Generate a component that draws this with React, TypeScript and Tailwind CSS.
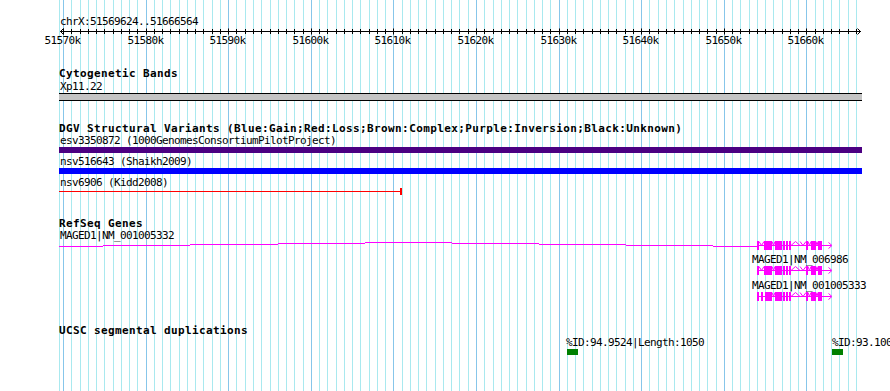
import React from "react";

// GBrowse-style track view of chrX:51569624..51666564
const X0 = 63.5; // x of 51570k
const KB = 8.26; // px per kb
const gx = (i: number) => Math.floor(X0 + i * KB);

const MINOR = "#a9e9ef";
const MAJOR = "#87c6ea";
const MAGENTA = "#ff00ff";

const GridLines = () => {
  const lines = [];
  lines.push(<rect key="start" x={59} y={0} width={1} height={391} fill={MINOR} />);
  for (let i = 0; i <= 96; i++) {
    lines.push(
      <rect key={i} x={gx(i)} y={0} width={1} height={391} fill={i % 10 === 0 ? MAJOR : MINOR} />
    );
  }
  return (
    <svg className="absolute inset-0" width={890} height={391}>
      {lines}
    </svg>
  );
};

const Ruler = () => {
  const ticks = [];
  for (let i = 0; i <= 96; i++) {
    const x = gx(i) + 0.5;
    const major = i % 10 === 0;
    ticks.push(
      <line key={i} x1={x} x2={x} y1={major ? 0.5 : 1} y2={major ? 6.5 : 6} stroke="#000" strokeWidth={1} />
    );
  }
  const labels = [];
  for (let i = 0; i <= 90; i += 10) {
    labels.push(
      <text key={i} x={gx(i) - 18.5} y={16} className="text-[11px] tracking-[-0.62px]" fill="#000">
        {51570 + i}k
      </text>
    );
  }
  return (
    <svg width={890} height={22} overflow="visible" className="block">
      <rect x={60} y={3} width={801} height={1} fill="#000" />
      <polyline points="63.5,0.5 60.5,3.5 63.5,6.5" fill="none" stroke="#000" />
      <polyline points="857.5,0.5 860.5,3.5 857.5,6.5" fill="none" stroke="#000" />
      {ticks}
      {labels}
    </svg>
  );
};

const Title = ({ children, className = "" }: { children: React.ReactNode; className?: string }) => (
  <div className={`h-[12px] pl-[59px] text-[11px] font-bold leading-[12px] tracking-[0.38px] whitespace-nowrap ${className}`}>
    {children}
  </div>
);

const Label = ({ x, y, children }: { x: number; y: number; children: React.ReactNode }) => (
  <text x={x} y={y} className="text-[11px] tracking-[-0.62px]" fill="#000">
    {children}
  </text>
);

type Row = { exons: [number, number][]; hats: [number, number][] };

const rowA: Row = {
  exons: [[757, 759], [764, 772], [775, 782], [783, 785], [786, 788], [789, 791], [806, 808], [811, 816], [818, 822]],
  hats: [[759, 764], [772, 775], [800, 806], [808, 811], [816, 818]],
};
const rowB: Row = {
  exons: [[757, 759], [761, 763], [765, 772], [775, 782], [783, 785], [786, 788], [789, 791], [806, 808], [811, 816], [818, 822]],
  hats: [[772, 775], [800, 806], [808, 811], [816, 818]],
};

const Transcript = ({ t, row }: { t: number; row: Row }) => {
  const m = t + 4.5;
  return (
    <g>
      <rect x={757} y={t + 4} width={74} height={1} fill={MAGENTA} />
      {row.exons.map(([a, b], i) => (
        <rect key={i} x={a} y={t} width={b - a} height={9} fill={MAGENTA} />
      ))}
      {row.hats.map(([a, b], i) => (
        <polyline key={i} points={`${a},${t + 0.5} ${(a + b) / 2},${m} ${b},${t + 0.5}`} fill="none" stroke={MAGENTA} />
      ))}
      <polyline points={`791,${m} 795.5,${t + 0.5} 800,${m}`} fill="none" stroke={MAGENTA} />
      <polyline points={`828.5,${m - 3} 832,${m} 828.5,${m + 3}`} fill="none" stroke={MAGENTA} />
    </g>
  );
};

// long intron hat of NM_001005332, coming from off-screen
const intron: [number, number, number][] = [
  [59, 103, 16], [103, 190, 15], [190, 278, 14], [278, 365, 13], [365, 452, 12],
  [452, 539, 13], [539, 626, 14], [626, 713, 15], [713, 757, 16],
];

export default function App() {
  return (
    <div className="relative h-[391px] w-[890px] overflow-hidden bg-white font-['DejaVu_Sans_Mono',monospace] text-black">
      <GridLines />
      <div className="relative flex flex-col pt-[16px]">
        <div className="h-[12px] pl-[60px] text-[11px] leading-[12px] tracking-[-0.62px]">chrX:51569624..51666564</div>
        <Ruler />

        <Title className="mt-[18px]">Cytogenetic Bands</Title>
        <svg width={890} height={22} overflow="visible" className="block">
          <Label x={60} y={10}>Xp11.22</Label>
          <rect x={59} y={13} width={803} height={8} fill="#000" />
          <rect x={59} y={14} width={803} height={6} fill="#c4c4c4" />
        </svg>

        <Title className="mt-[21px]">
          DGV Structural Variants (Blue:Gain;Red:Loss;Brown:Complex;Purple:Inversion;Black:Unknown)
        </Title>
        <svg width={890} height={62} overflow="visible" className="block">
          <Label x={60} y={9}>esv3350872 (1000GenomesConsortiumPilotProject)</Label>
          <rect x={59} y={12} width={803} height={6} fill="#4b0082" />
          <Label x={60} y={30}>nsv516643 (Shaikh2009)</Label>
          <rect x={59} y={33} width={803} height={6} fill="#0000ff" />
          <Label x={60} y={51}>nsv6906 (Kidd2008)</Label>
          <rect x={59} y={56} width={342} height={1} fill="#ff0000" />
          <rect x={400} y={53} width={2} height={7} fill="#ff0000" />
        </svg>

        <Title className="mt-[21px]">RefSeq Genes</Title>
        <svg width={890} height={75} overflow="visible" className="block">
          <Label x={60} y={9}>MAGED1|NM_001005332</Label>
          {intron.map(([a, b, y], i) => (
            <rect key={i} x={a} y={y} width={b - a} height={1} fill={MAGENTA} />
          ))}
          <Transcript t={11} row={rowA} />
          <Label x={752} y={33}>MAGED1|NM_006986</Label>
          <Transcript t={36} row={rowA} />
          <Label x={752} y={59}>MAGED1|NM_001005333</Label>
          <Transcript t={62} row={rowB} />
        </svg>

        <Title className="mt-[20px]">UCSC segmental duplications</Title>
        <svg width={890} height={24} overflow="visible" className="block">
          <Label x={566} y={9}>%ID:94.9524|Length:1050</Label>
          <rect x={567} y={12} width={11} height={6} fill="#008000" />
          <Label x={832} y={9}>%ID:93.100</Label>
          <rect x={832} y={12} width={11} height={6} fill="#008000" />
        </svg>
      </div>
    </div>
  );
}
